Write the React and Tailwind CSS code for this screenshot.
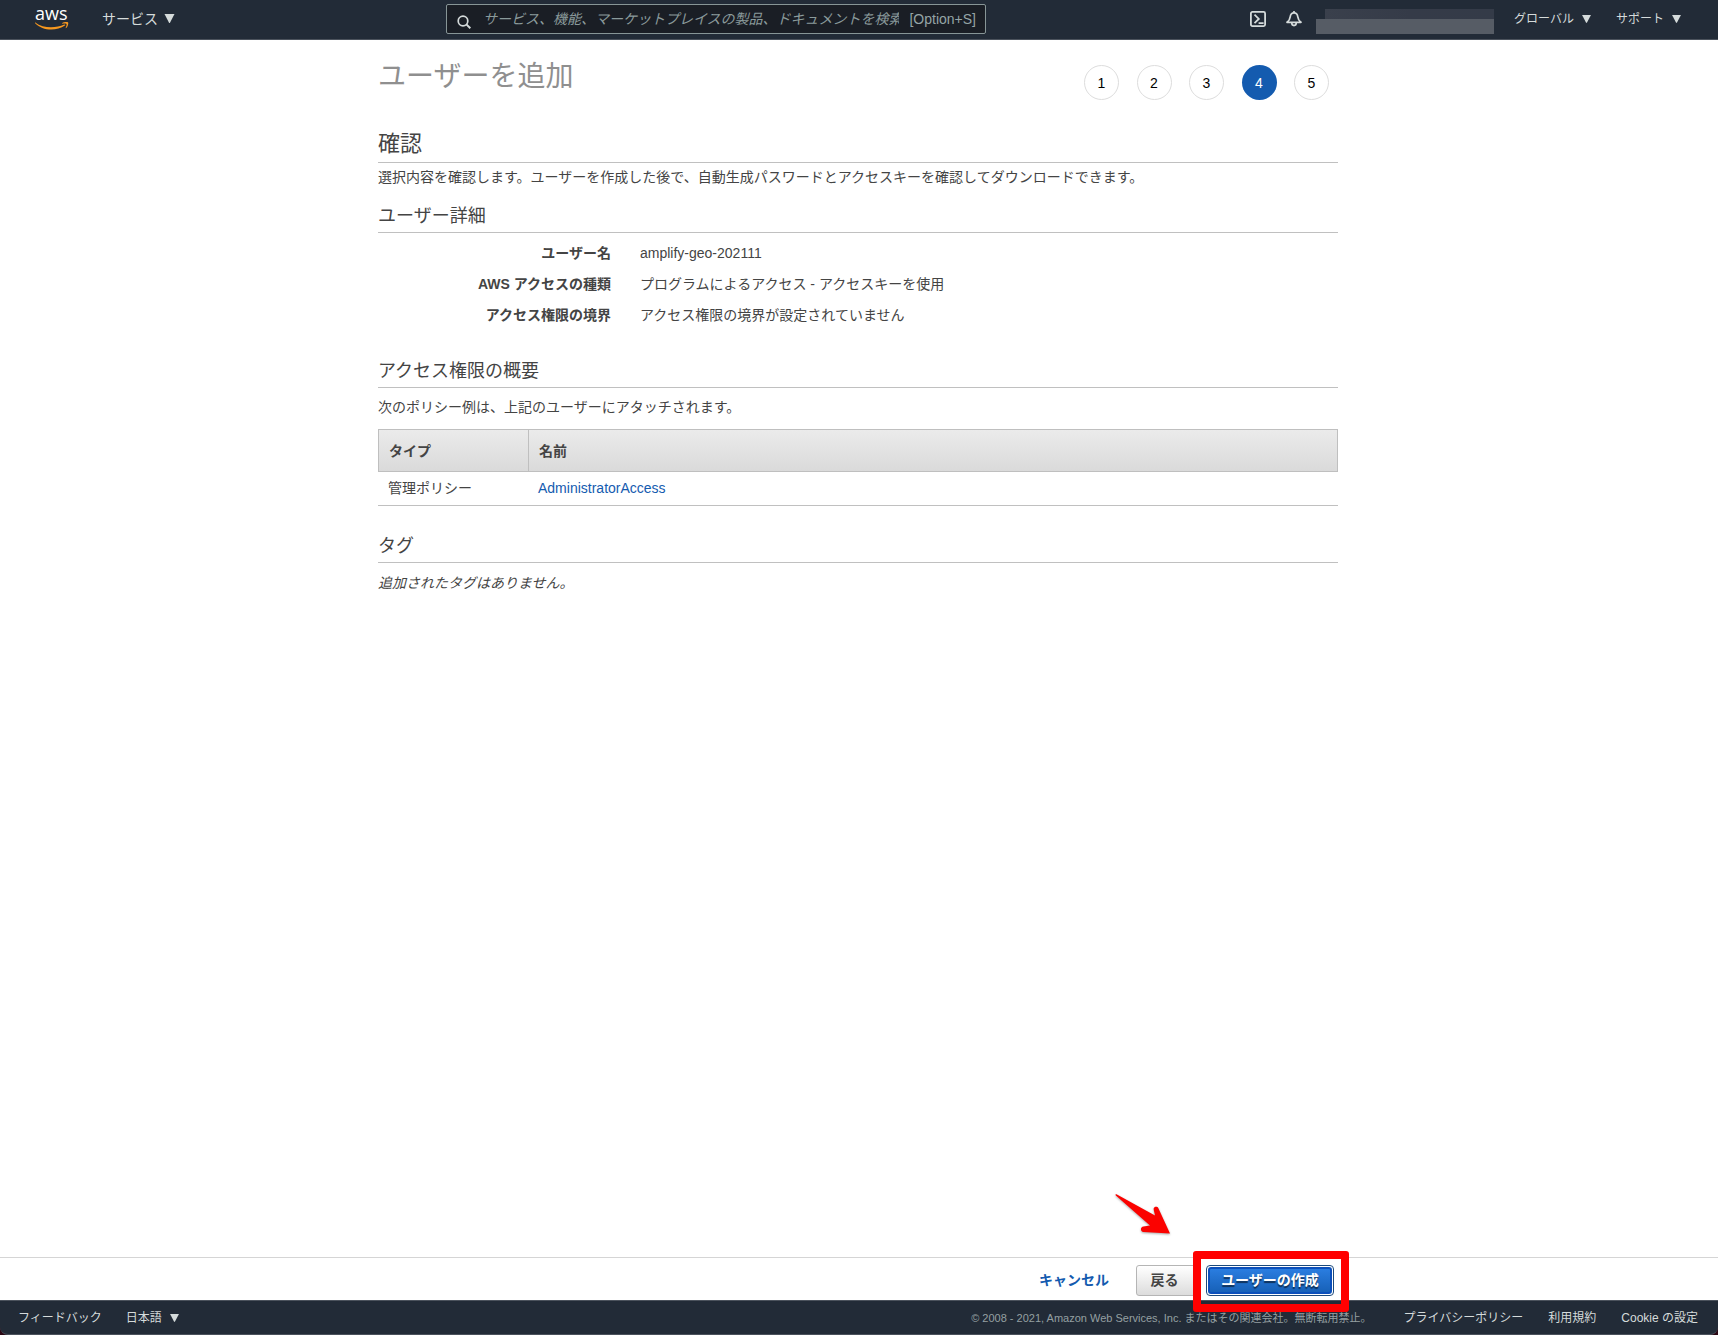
import React from "react";

function Caret({ className }) {
  return (
    <svg viewBox="0 0 10 9" className={className} aria-hidden="true">
      <path d="M0 0h10L5.6 8.4a.7.7 0 0 1-1.2 0z" fill="currentColor" />
    </svg>
  );
}

function AwsLogo() {
  return (
    <a href="#home" aria-label="AWS" className="block">
      <svg viewBox="0 -7 36 38" className="block h-[38px] w-9">
        <text x="0" y="13" fontSize="18" fill="#ffffff" fontFamily="'Open Sans', 'Noto Sans', sans-serif" fontWeight="500">
          aws
        </text>
        <path d="M0.3 15.400C4.6 18.700 10.4 20.200 16 20.200c4.6 0 9.400-.9 13.300-2.700.7-.3 1.300.5.6 1-3.700 2.700-9 4.100-13.600 4.100C10 22.600 4.300 20.200.1 16.200c-.5-.5-.2-1 .2-.8z" fill="#f7981f" />
        <path d="M27.300 16c1.300-1.100 5.200-1.300 5.800-.6.500.7-.2 4.300-1.900 5.700-.3.200-.7.100-.5-.3.500-1.200 1.200-3.300.8-3.800-.4-.5-2.700-.4-3.900-.3-.4 0-.6-.4-.3-.7z" fill="#f7981f" />
      </svg>
    </a>
  );
}

function TopBar() {
  return (
    <header className="flex h-10 items-center border-b border-[#4b525c] bg-[#222b37] pb-[2px] text-[#d5dbdb]">
      <div className="flex w-[446px] shrink-0 items-center pl-[35px]">
        <AwsLogo />
        <button type="button" className="ml-[31px] flex items-center gap-[6px] text-sm leading-5">
          サービス
          <Caret className="h-[9px] w-[11px]" />
        </button>
      </div>
      <div className="flex h-[30px] w-[540px] items-center rounded-[2px] border border-[#879596] bg-[#1a1e25] pr-[9px] pl-[10px] text-[#95a5a6]">
        <svg viewBox="0 0 14 14" className="mt-[6px] h-[14px] w-[14px] text-[#d5dbdb]" fill="none" stroke="currentColor" strokeWidth="1.700" aria-hidden="true">
          <circle cx="6" cy="6" r="4.800" />
          <path d="M9.400 9.400l3.900 3.900" strokeWidth="2" />
        </svg>
        <input
          type="text"
          aria-label="検索"
          placeholder="サービス、機能、マーケットプレイスの製品、ドキュメントを検索します"
          className="ml-3 h-6 min-w-0 flex-1 bg-transparent text-sm outline-none placeholder:text-[#8a9a9b] placeholder:italic"
        />
        <span className="ml-[10px] text-sm leading-5">[Option+S]</span>
      </div>
      <div className="flex flex-1 items-center justify-end pr-[37px] text-xs leading-5">
        <button type="button" aria-label="CloudShell">
          <svg viewBox="0 0 16 16" className="h-4 w-4" fill="none" stroke="currentColor" strokeWidth="1.800">
            <rect x="0.900" y="0.900" width="14.200" height="14.200" rx="1.500" />
            <path d="M4.500 3.700l4.300 4.200-4.300 4.200M8.600 12.200h5" />
          </svg>
        </button>
        <button type="button" aria-label="通知" className="ml-5">
          <svg viewBox="0 0 16 16" className="h-4 w-4" fill="none" stroke="currentColor" strokeWidth="1.700" strokeLinejoin="round">
            <path d="M1 11.300c2.200-1.600 2.900-3.200 3.200-5.500C4.500 3.300 5.800 1.800 8 1.800s3.500 1.500 3.800 4c.3 2.300 1 3.900 3.200 5.500z" />
            <path d="M8 0v2M5.700 11.600a2.300 3 0 0 0 4.600 0" />
          </svg>
        </button>
        <div className="mt-[5px] ml-[14px] flex w-[178px] flex-col items-end">
          <div className="h-[10px] w-[169px] bg-linear-to-r from-[#3a404c] via-[#353b48] to-[#343b48]" />
          <div className="h-[15px] w-full bg-[#565c65]" />
        </div>
        <button type="button" className="ml-5 flex items-center gap-2">
          グローバル
          <Caret className="h-2 w-[9px]" />
        </button>
        <button type="button" className="ml-[25px] flex items-center gap-2">
          サポート
          <Caret className="h-2 w-[9px]" />
        </button>
      </div>
    </header>
  );
}

function Steps({ current }) {
  return (
    <ol className="mt-[10px] mr-[9px] flex w-[245px] justify-between text-sm" aria-label="ステップ">
      {[1, 2, 3, 4, 5].map((n) => (
        <li
          key={n}
          aria-current={n === current ? "step" : undefined}
          className={
            n === current
              ? "flex h-[35px] w-[35px] items-center justify-center rounded-full bg-[#145baf] text-white"
              : "flex h-[35px] w-[35px] items-center justify-center rounded-full border border-[#dddddd] text-black"
          }
        >
          {n}
        </li>
      ))}
    </ol>
  );
}

function SubHeading({ className, children }) {
  return (
    <h3 className={`border-b border-[#c0c0c0] pb-1 text-lg leading-6 ${className}`}>{children}</h3>
  );
}

const details = [
  ["ユーザー名", "amplify-geo-202111"],
  ["AWS アクセスの種類", "プログラムによるアクセス - アクセスキーを使用"],
  ["アクセス権限の境界", "アクセス権限の境界が設定されていません"],
];

function Review() {
  return (
    <div className="flex-1 pr-[2px]">
      <main className="mx-auto w-full max-w-[960px] pt-[15px]">
        <div className="flex items-start justify-between">
          <h1 className="pt-[2px] text-[28px] leading-10 text-[#8f8f8f]">ユーザーを追加</h1>
          <Steps current={4} />
        </div>

        <h2 className="mt-[30px] border-b border-[#c0c0c0] pb-1 text-[22px] leading-7">確認</h2>
        <p className="mt-1">
          選択内容を確認します。ユーザーを作成した後で、自動生成パスワードとアクセスキーを確認してダウンロードできます。
        </p>

        <SubHeading className="mt-[17px]">ユーザー詳細</SubHeading>
        <dl className="mt-[10px] grid grid-cols-[233px_1fr] gap-x-[29px] gap-y-[11px]">
          {details.map(([label, value]) => (
            <React.Fragment key={label}>
              <dt className="text-right font-bold">{label}</dt>
              <dd>{value}</dd>
            </React.Fragment>
          ))}
        </dl>

        <SubHeading className="mt-[34px]">アクセス権限の概要</SubHeading>
        <p className="mt-[9px]">次のポリシー例は、上記のユーザーにアタッチされます。</p>
        <table className="mt-3 w-full table-fixed border-separate border-spacing-0 text-left">
          <thead>
            <tr>
              <th scope="col" className="h-[43px] w-[150px] border border-r-0 border-[#bfbfbf] bg-linear-to-b from-[#ebebeb] to-[#dadada] pl-[10px] font-bold">
                タイプ
              </th>
              <th scope="col" className="h-[43px] border border-[#bfbfbf] bg-linear-to-b from-[#ebebeb] to-[#dadada] pl-[10px] font-bold">
                名前
              </th>
            </tr>
          </thead>
          <tbody>
            <tr>
              <td className="h-[34px] border-b border-[#c0c0c0] pb-[2px] pl-[10px]">管理ポリシー</td>
              <td className="h-[34px] border-b border-[#c0c0c0] pb-[2px] pl-[10px]">
                <a href="#AdministratorAccess" className="text-[#145baf]">AdministratorAccess</a>
              </td>
            </tr>
          </tbody>
        </table>

        <SubHeading className="mt-7">タグ</SubHeading>
        <p className="mt-[10px] italic">追加されたタグはありません。</p>
      </main>
    </div>
  );
}

function Arrow() {
  return (
    <svg viewBox="0 0 56 42" className="absolute right-[167px] bottom-16 h-[42px] w-[56px] drop-shadow-[0_1px_1px_rgba(0,0,0,0.35)]" aria-hidden="true">
      <path d="M1.500 0.300L40 21.500c-.5-3-1.500-5.500-1.300-7 .4-2 3.800-2.300 4.700-.3L55 39.500 28.500 38c-3.500-.5-3.300-5.300 0-5.500l6.500-1L.8 1.500C0 .7.600-.1 1.500.3z" fill="#fb0200" />
    </svg>
  );
}

function Actions() {
  return (
    <div className="border-t border-[#d5d5d5] bg-white pr-[2px]">
      <div className="relative mx-auto flex h-[42px] w-full max-w-[960px] items-center justify-end pt-[2px] pr-1 font-bold">
        <Arrow />
        <button type="button" className="mr-[27px] text-[#145baf]">キャンセル</button>
        <button type="button" className="h-[31px] w-[61px] rounded-[3px] border border-[#b5b5b5] bg-linear-to-b from-white to-[#dcdcdc] pr-1">
          戻る
        </button>
        <div className="relative ml-[9px]">
          <button
            type="button"
            className="block h-[31px] w-32 rounded-[4px] border border-[#1c4a7c] bg-white p-px text-white"
          >
            <span className="flex h-full items-center justify-center rounded-[3px] border-2 border-[#0b4fbb] bg-linear-to-b from-[#2a7de0] to-[#1761b8] [text-shadow:0_2px_1px_rgba(0,0,0,0.55)]">
              ユーザーの作成
            </span>
          </button>
          <div className="pointer-events-none absolute -top-[14px] -right-[15px] -bottom-4 -left-[13px] z-10 rounded-[3px] border-8 border-[#ff0000]" />
        </div>
      </div>
    </div>
  );
}

function Footer() {
  return (
    <footer className="bg-[#2b0714]">
      <div className="flex h-[35px] items-center justify-between rounded-b-lg border-y border-[#4b525c] bg-[#222b37] pr-[20px] pl-[18px] text-xs leading-5 text-[#d5dbdb]">
        <div className="flex items-center">
          <a href="#feedback">フィードバック</a>
          <button type="button" className="ml-6 flex items-center gap-2">
            日本語
            <Caret className="h-2 w-[9px]" />
          </button>
        </div>
        <div className="flex items-center">
          <span className="text-[11px] text-[#95a0a2]">
            © 2008 - 2021, Amazon Web Services, Inc. またはその関連会社。無断転用禁止。
          </span>
          <a href="#privacy" className="ml-8">プライバシーポリシー</a>
          <a href="#terms" className="ml-[25px]">利用規約</a>
          <a href="#cookies" className="ml-[25px]">Cookie の設定</a>
        </div>
      </div>
    </footer>
  );
}

export default function App() {
  return (
    <div
      lang="ja"
      className="flex min-h-screen flex-col bg-white font-['Liberation_Sans','Noto_Sans_CJK_JP',sans-serif] text-sm leading-5 text-[#444444]"
    >
      <TopBar />
      <Review />
      <Actions />
      <Footer />
    </div>
  );
}
